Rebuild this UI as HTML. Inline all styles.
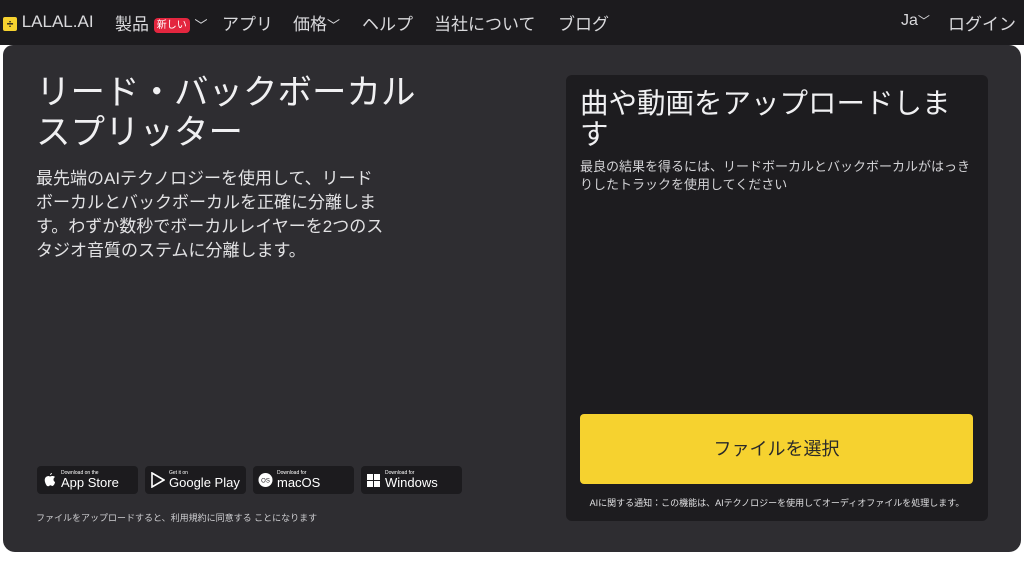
<!DOCTYPE html><html><head><meta charset="utf-8"><style>
*{margin:0;padding:0;box-sizing:border-box}
body{width:1024px;height:567px;background:#fff;font-family:"Liberation Sans","Noto Sans CJK JP",sans-serif;color:#e8e8ea;position:relative;overflow:hidden}
.top{position:absolute;left:0;top:0;width:1024px;height:45px;background:#1c1b1e}
.nav{position:absolute;top:10px;font-size:17px;color:#d9d9dc;white-space:nowrap}
.main{position:absolute;left:3px;top:45px;width:1018px;height:507px;background:#2e2d31;border-radius:10px 12px 12px 12px}
h1{position:absolute;left:36px;top:73px;font-size:34.5px;font-weight:400;line-height:40px;color:#f0f0f2}
.p{position:absolute;left:36px;top:167px;font-size:17px;line-height:24px;width:360px;color:#e2e2e4}
.badge{position:absolute;top:466px;width:101px;height:28px;background:#1c1b1e;border-radius:4px;color:#fff}
.badge .s{position:absolute;left:24px;top:4px;font-size:5px}
.badge .b{position:absolute;left:24px;top:9px;font-size:13px}
.badge svg{position:absolute;left:5px;top:6px}
.card{position:absolute;left:566px;top:75px;width:422px;height:446px;background:#1d1c1f;border-radius:6px}
.btn{position:absolute;left:14px;top:339px;width:393px;height:70px;background:#f6d22f;border-radius:4px;color:#2a2a2a;font-size:18px;text-align:center;line-height:70px}
</style></head><body>
<div class="top">
<div class="nav" style="left:3px;top:12px"><span style="display:inline-block;width:14px;height:14px;background:#f6d22f;border-radius:2px;vertical-align:-1px;color:#1c1b1e;font-size:12px;line-height:14px;text-align:center;font-weight:700">÷</span> LALAL.AI</div>
<div class="nav" style="left:115px">製品 <span style="background:#e3263f;color:#fff;font-size:10px;padding:2px 3px;border-radius:4px;vertical-align:2px">新しい</span> <span style="font-size:13px">﹀</span></div>
<div class="nav" style="left:222px">アプリ</div>
<div class="nav" style="left:293px">価格<span style="font-size:13px">﹀</span></div>
<div class="nav" style="left:362px">ヘルプ</div>
<div class="nav" style="left:434px">当社について</div>
<div class="nav" style="left:558px">ブログ</div>
<div class="nav" style="left:901px;top:12px;font-size:16px">Ja<span style="font-size:12px">﹀</span></div>
<div class="nav" style="left:948px">ログイン</div>
</div>
<div class="main"></div>
<h1>リード・バックボーカル<br>スプリッター</h1>
<div class="p">最先端のAIテクノロジーを使用して、リード<br>ボーカルとバックボーカルを正確に分離しま<br>す。わずか数秒でボーカルレイヤーを2つのス<br>タジオ音質のステムに分離します。</div>
<div class="badge" style="left:37px"><svg width="15" height="16" viewBox="0 0 15 16"><path d="M10 1c-1 0-2 1-2 2 1 0 2-1 2-2zM7 4C4 4 2 6 3 10c1 3 2 5 4 4 1-1 2-1 3 0 2 0 3-3 3-4-2-1-2-4 0-5-1-1-2-1-3-1-1 0-2 1-3 0z" fill="#fff"/></svg><span class="s">Download on the</span><span class="b">App Store</span></div>
<div class="badge" style="left:145px"><svg width="15" height="16" viewBox="0 0 15 16"><path d="M2 1l12 7-12 7z" fill="none" stroke="#fff" stroke-width="1.6"/></svg><span class="s">Get it on</span><span class="b">Google Play</span></div>
<div class="badge" style="left:253px"><svg width="15" height="16" viewBox="0 0 15 16"><circle cx="7.5" cy="8" r="7" fill="#fff"/><text x="7.5" y="10.5" font-size="6" text-anchor="middle" fill="#1c1b1e">OS</text></svg><span class="s">Download for</span><span class="b">macOS</span></div>
<div class="badge" style="left:361px"><svg width="15" height="16" viewBox="0 0 15 16"><path d="M1 2h6v6H1zM8 2h6v6H8zM1 9h6v6H1zM8 9h6v6H8z" fill="#fff"/></svg><span class="s">Download for</span><span class="b">Windows</span></div>
<div style="position:absolute;left:36px;top:511px;font-size:9px;color:#cfcfd2">ファイルをアップロードすると、利用規約に同意する ことになります</div>
<div class="card">
<div style="position:absolute;left:14px;top:14px;font-size:28.5px;line-height:31px;width:400px;color:#f0f0f2">曲や動画をアップロードしま<br>す</div>
<div style="position:absolute;left:14px;top:83px;font-size:13px;line-height:18px;color:#d2d2d5">最良の結果を得るには、リードボーカルとバックボーカルがはっき<br>りしたトラックを使用してください</div>
<div class="btn">ファイルを選択</div>
<div style="position:absolute;left:0;width:422px;text-align:center;top:421px;font-size:9px;color:#e0e0e2">AIに関する通知：この機能は、AIテクノロジーを使用してオーディオファイルを処理します。</div>
</div>
</body></html>
